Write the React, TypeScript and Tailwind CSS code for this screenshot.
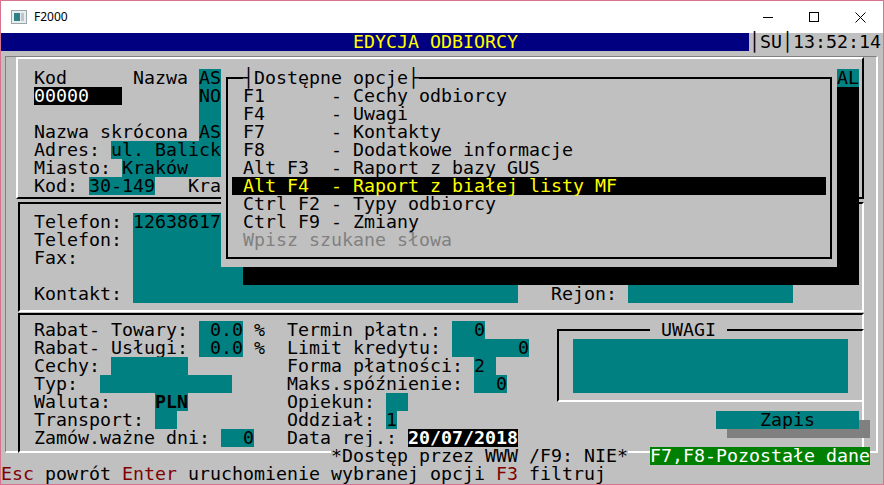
import React from 'react';

// [column, text, classes, width in cells]
type Seg = [number, string, string?, number?];

const CW = 11;
const TEAL = 'bg-[#008080] text-black';
const INV = 'bg-black text-white';
const NAVY = 'bg-[#000080]';
const GRAY = 'bg-[#c0c0c0]';
const RED = 'text-[#800000]';

const rows: Seg[][] = [
  [[0, '', NAVY, 32], [32, 'EDYCJA ODBIORCY', 'bg-[#000080] text-[#ffff00]'], [47, '', NAVY, 21], [68, '│SU│13:52:14']],
  [],
  [[3, 'Kod'], [12, 'Nazwa'], [18, 'AS', TEAL], [20, '', TEAL, 56], [76, 'AL', TEAL]],
  [[3, '00000', INV, 8], [18, 'NO', TEAL], [20, '', TEAL, 56]],
  [[18, '', TEAL, 58]],
  [[3, 'Nazwa skrócona'], [18, 'AS', TEAL], [20, '', TEAL, 56]],
  [[3, 'Adres:'], [10, 'ul. Balick', TEAL, 10]],
  [[3, 'Miasto:'], [11, 'Kraków', TEAL, 9]],
  [[3, 'Kod:'], [8, '30-149', TEAL], [17, 'Kra']],
  [],
  [[3, 'Telefon:'], [12, '12638617', TEAL, 35]],
  [[3, 'Telefon:'], [12, '', TEAL, 35]],
  [[3, 'Fax:'], [12, '', TEAL, 35]],
  [[12, '', TEAL, 35]],
  [[3, 'Kontakt:'], [12, '', TEAL, 35], [50, 'Rejon:'], [57, '', TEAL, 15]],
  [],
  [[3, 'Rabat- Towary:'], [18, ' 0.0', TEAL], [23, '%'], [26, 'Termin płatn.:'], [41, '  0', TEAL], [59, ' UWAGI ', GRAY]],
  [[3, 'Rabat- Usługi:'], [18, ' 0.0', TEAL], [23, '%'], [26, 'Limit kredytu:'], [41, '      0', TEAL], [52, '', TEAL, 25]],
  [[3, 'Cechy:'], [10, '', TEAL, 7], [26, 'Forma płatności:'], [43, '2 ', TEAL], [52, '', TEAL, 25]],
  [[3, 'Typ:'], [9, '', TEAL, 12], [26, 'Maks.spóźnienie:'], [43, '  0', TEAL], [52, '', TEAL, 25]],
  [[3, 'Waluta:'], [14, 'PLN', 'bg-[#008080] text-black font-bold'], [26, 'Opiekun:'], [35, '', TEAL, 2]],
  [[3, 'Transport:'], [14, '', TEAL, 2], [26, 'Oddział:'], [35, '1', TEAL], [65, '    Zapis    ', TEAL], [78, '', 'bg-[linear-gradient(to_bottom,transparent_50%,#808080_50%)]', 1]],
  [[3, 'Zamów.ważne dni:'], [20, '  0', TEAL], [26, 'Data rej.:'], [37, '20/07/2018', 'bg-black text-white font-bold'], [66, '', 'bg-[linear-gradient(to_bottom,#808080_50%,transparent_50%)]', 13]],
  [[30, '*Dostęp przez WWW /F9: NIE*', GRAY], [59, 'F7,F8-Pozostałe dane', 'bg-[#008000] text-white']],
  [[0, 'Esc', RED], [4, 'powrót'], [11, 'Enter', RED], [17, 'uruchomienie wybranej opcji'], [45, 'F3', RED], [48, 'filtruj']],
];

const menu: Seg[][] = [
  [[2, '┤', GRAY], [3, 'Dostępne opcje', GRAY], [17, '├', GRAY]],
  [[2, 'F1      - Cechy odbiorcy']],
  [[2, 'F4      - Uwagi']],
  [[2, 'F7      - Kontakty']],
  [[2, 'F8      - Dodatkowe informacje']],
  [[2, 'Alt F3  - Raport z bazy GUS']],
  [[1, ' Alt F4  - Raport z białej listy MF', 'bg-black text-[#ffff00]', 54]],
  [[2, 'Ctrl F2 - Typy odbiorcy']],
  [[2, 'Ctrl F9 - Zmiany']],
  [[2, 'Wpisz szukane słowa', 'text-[#808080]']],
  [],
];

function Row({ segs, cols }: { segs: Seg[]; cols: number }) {
  const out: React.ReactNode[] = [];
  let cur = 0;
  segs.forEach(([col, text, cls = '', w], i) => {
    if (col > cur) out.push(<span key={'g' + i} className="shrink-0" style={{ width: (col - cur) * CW }} />);
    const width = w ?? text.length;
    out.push(
      <span key={i} className={`shrink-0 whitespace-pre ${cls}`} style={{ width: width * CW }}>
        {text}
      </span>
    );
    cur = col + width;
  });
  if (cur < cols) out.push(<span key="end" className="shrink-0" style={{ width: (cols - cur) * CW }} />);
  return <div className="relative flex h-[18px] leading-[18px]">{out}</div>;
}

function TitleBar() {
  return (
    <div className="flex h-[32px] items-center bg-white">
      <div className="ml-[10px] flex h-[14px] w-[16px] items-center border border-[#9aa7a8] bg-[#e8eef0] p-[2px]">
        <div className="h-full w-[6px] bg-[#2f7f86]" />
        <div className="ml-[1px] h-full flex-1 bg-[#b9c7c9]" />
      </div>
      <span className="ml-[7px] font-['Noto_Sans',sans-serif] text-[12px] text-black">F2000</span>
      <div className="ml-auto flex h-full">
        <div className="flex w-[46px] items-center justify-center">
          <svg width="10" height="10" viewBox="0 0 10 10"><path d="M0 5.5h10" stroke="#000" strokeWidth="1" /></svg>
        </div>
        <div className="flex w-[46px] items-center justify-center">
          <svg width="10" height="10" viewBox="0 0 10 10"><rect x="0.5" y="0.5" width="9" height="9" fill="none" stroke="#000" strokeWidth="1" /></svg>
        </div>
        <div className="flex w-[46px] items-center justify-center">
          <svg width="11" height="11" viewBox="0 0 11 11"><path d="M0.5 0.5l10 10M10.5 0.5l-10 10" stroke="#000" strokeWidth="1" /></svg>
        </div>
      </div>
    </div>
  );
}

export default function App() {
  return (
    <div className="h-[485px] w-[884px] overflow-hidden border border-[#d8738f] bg-[#c0c0c0]">
      <TitleBar />
      <div className="relative w-[880px] font-['DejaVu_Sans_Mono',monospace] text-[18.27px] text-black">
        {/* outer etched frame */}
        <div className="absolute left-[4px] top-[23px] h-[397px] w-[873px] border-t border-l border-[#808080] border-r-2 border-b-2 border-r-white border-b-white" />
        {/* top section, raised */}
        <div className="absolute left-[15px] top-[24px] h-[142px] w-[848px] border-2 border-t-white border-l-white border-r-black border-b-black" />
        {/* phones section, sunken */}
        <div className="absolute left-[17px] top-[169px] h-[110px] w-[846px] border-2 border-t-black border-l-black border-r-white border-b-white" />
        {/* lower section, sunken */}
        <div className="absolute left-[17px] top-[280px] h-[140px] w-[846px] border-2 border-t-black border-l-black border-r-white border-b-white" />
        {/* UWAGI frame */}
        <div className="absolute left-[556px] top-[296px] h-[73px] w-[307px] border-2 border-t-black border-l-black border-r-white border-b-white" />

        {rows.map((r, i) => (
          <Row key={i} segs={r} cols={80} />
        ))}

        {/* options popup */}
        <div className="absolute left-[220px] top-[36px] h-[198px] w-[616px] bg-[#c0c0c0] shadow-[22px_18px_0_0_#000]">
          <div className="absolute bottom-[8px] left-[5px] right-[5px] top-[8px] border-2 border-black" />
          {menu.map((r, i) => (
            <Row key={i} segs={r} cols={56} />
          ))}
        </div>
      </div>
    </div>
  );
}
